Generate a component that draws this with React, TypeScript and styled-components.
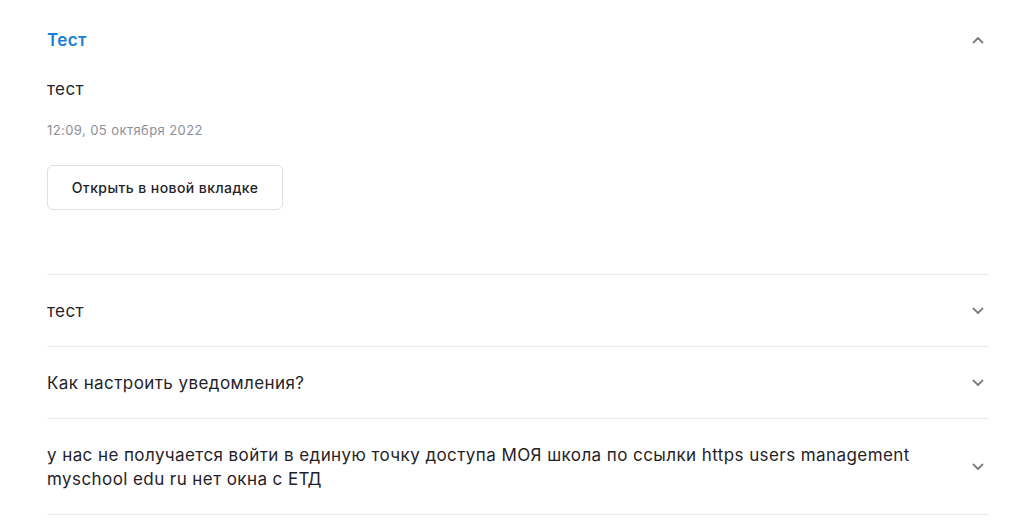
import React, { useState } from "react";
import styled, { createGlobalStyle } from "styled-components";

const GlobalStyle = createGlobalStyle`
  html, body {
    margin: 0;
    padding: 0;
    background: #ffffff;
  }
  body {
    font-family: Inter, "Noto Sans", "Liberation Sans", sans-serif;
    letter-spacing: 0.42px;
    color: #1f2329;
    -webkit-font-smoothing: antialiased;
  }
`;

const StyledPage = styled.main`
  padding: 4px 35px 0 47px;
`;

const StyledList = styled.ul`
  list-style: none;
  margin: 0;
  padding: 0;
`;

const StyledItem = styled.li<{ $open?: boolean }>`
  border-bottom: 1px solid #e6e8eb;
  padding-bottom: ${(p) => (p.$open ? "64px" : "0")};
`;

const StyledHeader = styled.button<{ $open?: boolean }>`
  display: flex;
  align-items: center;
  justify-content: space-between;
  gap: 40px;
  width: 100%;
  padding: 24px 0 23px;
  border: 0;
  background: none;
  cursor: pointer;
  text-align: left;
  font-family: inherit;
  letter-spacing: inherit;
  font-size: 17px;
  line-height: 24px;
  font-weight: ${(p) => (p.$open ? 600 : 400)};
  color: ${(p) => (p.$open ? "#1a7fd8" : "#1f2329")};
`;

const StyledTitle = styled.span`
  flex: 1;
`;

const StyledChevron = styled.svg`
  flex: none;
  width: 12px;
  height: 8px;
  margin-right: 5px;
  color: #7a7e85;
`;

const StyledBody = styled.div`
  display: flex;
  flex-direction: column;
  align-items: flex-start;
  padding-top: 2px;
`;

const StyledText = styled.p`
  margin: 0;
  font-size: 17px;
  line-height: 24px;
  color: #1f2329;
`;

const StyledDate = styled.span`
  margin-top: 19px;
  font-size: 13px;
  line-height: 20px;
  color: #8b9098;
`;

const StyledButton = styled.button`
  margin-top: 25px;
  height: 45px;
  width: 236px;
  border: 1px solid #dcdfe3;
  border-radius: 6px;
  background: #ffffff;
  font-family: inherit;
  letter-spacing: inherit;
  font-size: 14px;
  font-weight: 500;
  color: #1f2329;
  cursor: pointer;
`;

const Chevron = ({ up }: { up?: boolean }) => (
  <StyledChevron viewBox="0 0 12 8" fill="none">
    <path
      d={up ? "M1.5 6.5L6 2L10.5 6.5" : "M1.5 1.5L6 6L10.5 1.5"}
      stroke="currentColor"
      strokeWidth="1.8"
      strokeLinecap="round"
      strokeLinejoin="round"
    />
  </StyledChevron>
);

const items = [
  {
    title: "Тест",
    text: "тест",
    date: "12:09, 05 октября 2022",
  },
  { title: "тест", text: "", date: "" },
  { title: "Как настроить уведомления?", text: "", date: "" },
  {
    title:
      "у нас не получается войти в единую точку доступа МОЯ школа по ссылки https users management myschool edu ru нет окна с ЕТД",
    text: "",
    date: "",
  },
];

export default function App() {
  const [open, setOpen] = useState(0);

  return (
    <StyledPage>
      <GlobalStyle />
      <StyledList>
        {items.map((item, i) => {
          const isOpen = open === i;
          return (
            <StyledItem key={i} $open={isOpen}>
              <StyledHeader
                $open={isOpen}
                onClick={() => setOpen(isOpen ? -1 : i)}
              >
                <StyledTitle>{item.title}</StyledTitle>
                <Chevron up={isOpen} />
              </StyledHeader>
              {isOpen && (
                <StyledBody>
                  <StyledText>{item.text}</StyledText>
                  <StyledDate>{item.date}</StyledDate>
                  <StyledButton>Открыть в новой вкладке</StyledButton>
                </StyledBody>
              )}
            </StyledItem>
          );
        })}
      </StyledList>
    </StyledPage>
  );
}
